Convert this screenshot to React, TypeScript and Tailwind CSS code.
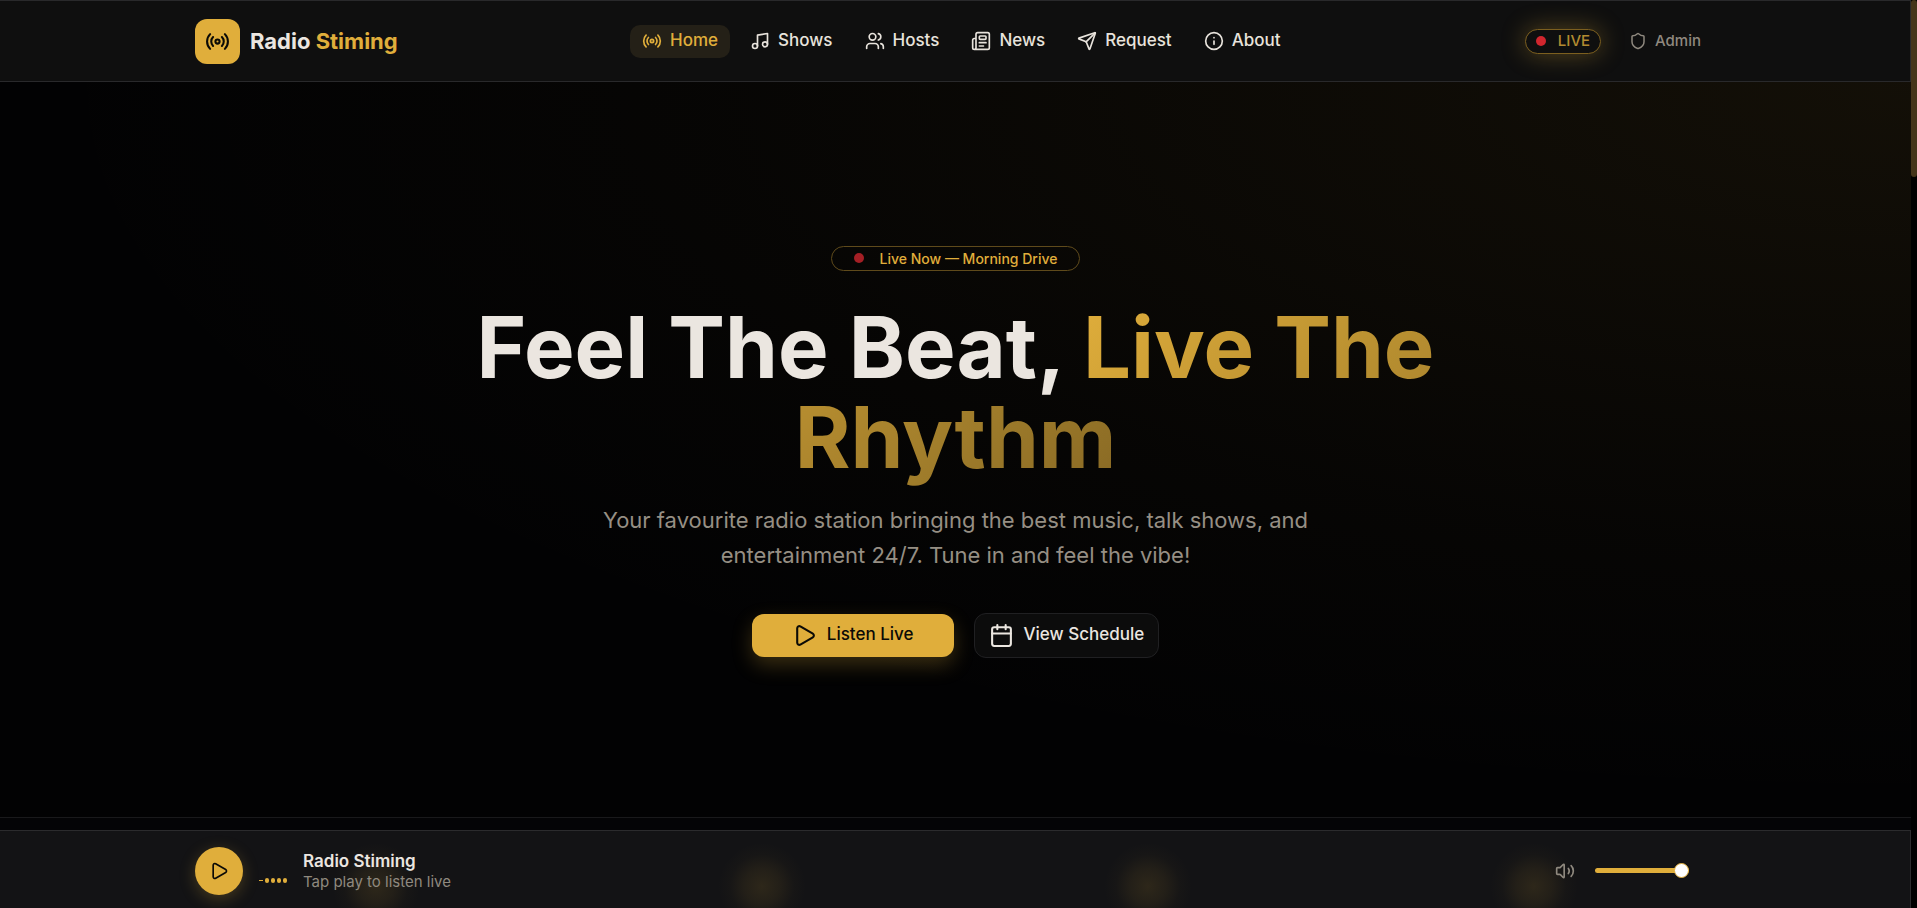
import { useState } from "react";
import {
  Calendar,
  Info,
  LucideIcon,
  Music,
  Newspaper,
  Play,
  Radio,
  Send,
  Shield,
  Users,
  Volume2,
} from "lucide-react";

interface NavItem {
  label: string;
  icon: LucideIcon;
  href: string;
}

const navItems: NavItem[] = [
  { label: "Home", icon: Radio, href: "#home" },
  { label: "Shows", icon: Music, href: "#shows" },
  { label: "Hosts", icon: Users, href: "#hosts" },
  { label: "News", icon: Newspaper, href: "#news" },
  { label: "Request", icon: Send, href: "#request" },
  { label: "About", icon: Info, href: "#about" },
];

const Header = () => {
  const [active, setActive] = useState("Home");

  return (
    <header className="border border-l-0 border-[#29292b] bg-[#0f0f0f]">
      <div className="mx-auto flex h-20 max-w-[1600px] items-center justify-between px-10">
        <a href="#home" className="flex items-center gap-2.5">
          <span className="flex size-[45px] items-center justify-center rounded-xl bg-[#e0ae3b] text-[#0b0a06]">
            <Radio className="size-[25px]" />
          </span>
          <span className="text-[22px] font-bold text-[#ebe6e0]">
            Radio <span className="text-[#e0ae3b]">Stiming</span>
          </span>
        </a>

        <nav className="flex items-center gap-2">
          {navItems.map(({ label, icon: Icon, href }) => (
            <a
              key={label}
              href={href}
              onClick={() => setActive(label)}
              className={`flex h-[33px] items-center gap-2 rounded-[10px] px-3 text-[17px] font-medium ${
                active === label ? "bg-[#242017] text-[#e0ae3b]" : "text-[#e8e3dc]"
              }`}
            >
              <Icon className="size-5" />
              {label}
            </a>
          ))}
        </nav>

        <div className="flex items-center gap-4 pr-3.5">
          <div className="flex h-[25px] items-center gap-3 rounded-full border border-[#7c5f1f] bg-[#0f0f0f] px-2.5 text-[15px] font-medium text-[#b18a30] shadow-[0_0_24px_rgba(224,174,59,0.35)]">
            <span className="size-2.5 rounded-full bg-[#d1262e]" />
            LIVE
          </div>
          <a href="#admin" className="flex items-center gap-2 pl-3 text-[15px] font-medium text-[#8f897f]">
            <Shield className="size-[18px]" />
            Admin
          </a>
        </div>
      </div>
    </header>
  );
};

const Hero = () => (
  <section
    id="home"
    className="flex flex-1 flex-col items-center justify-center border-b border-[#19191b] bg-[radial-gradient(ellipse_at_top_right,rgba(224,174,59,0.08),rgba(224,174,59,0.02)_45%,transparent_70%)] px-10 pt-1 text-center"
  >
    <div className="mb-8 flex h-[25px] items-center gap-4 rounded-full border border-[#5f4a1b] px-[22px] text-[14px] font-medium text-[#e0ae3b]">
      <span className="size-2.5 rounded-full bg-[#a41f25]" />
      Live Now — Morning Drive
    </div>

    <h1 className="mb-5 max-w-[1120px] text-[85px] leading-[90px] font-bold text-[#ebe6e0]">
      Feel The Beat,{" "}
      <span className="bg-linear-135 from-[#e0ae3b] to-[#e0ae3b]/60 bg-clip-text text-transparent">
        Live The Rhythm
      </span>
    </h1>

    <p className="mb-10 max-w-[720px] text-[22px] leading-[35px] text-[#968f84]">
      Your favourite radio station bringing the best music, talk shows, and entertainment 24/7. Tune in and feel
      the vibe!
    </p>

    <div className="flex items-center gap-5">
      <button className="flex h-[43px] items-center gap-2.5 rounded-xl bg-[#e0ae3b] px-10 text-[17px] font-medium text-[#0b0a06] shadow-[0_8px_20px_rgba(224,174,59,0.25)]">
        <Play className="size-[25px]" />
        Listen Live
      </button>
      <button className="flex h-[45px] items-center gap-2.5 rounded-xl border border-[#202022] bg-[#0c0c0c] px-3.5 text-[17px] font-medium text-[#ebe6e0]">
        <Calendar className="size-[25px]" />
        View Schedule
      </button>
    </div>
  </section>
);

const Player = () => {
  const [playing, setPlaying] = useState(false);
  const [volume, setVolume] = useState(100);

  return (
    <footer className="relative border-t border-r border-[#2b2b2d] bg-[#131315]">
      <div className="absolute inset-0 overflow-hidden" aria-hidden="true">
        <div className="mx-auto grid h-full max-w-[1600px] grid-cols-4 gap-6 px-10">
          {[0, 1, 2, 3].map((i) => (
            <div
              key={i}
              className="bg-[radial-gradient(circle_at_50%_72%,rgba(224,174,59,0.13),rgba(224,174,59,0.08)_18px,rgba(224,174,59,0.02)_32px,transparent_44px)]"
            />
          ))}
        </div>
      </div>

      <div className="relative mx-auto flex h-[77px] max-w-[1600px] items-center justify-between px-10 pt-0.5">
        <div className="flex items-center gap-4">
          <button
            aria-label={playing ? "Pause" : "Play"}
            onClick={() => setPlaying(!playing)}
            className="flex size-12 items-center justify-center rounded-full bg-[#e0ae3b] text-[#0b0a06] shadow-[0_4px_16px_rgba(224,174,59,0.25)]"
          >
            <Play className="size-5" />
          </button>
          <div className="flex h-6 items-end gap-0.5">
            <span className="mb-0.5 h-px w-1 bg-[#e0ae3b]" />
            <span className="h-[5px] w-1 rounded-full bg-[#e0ae3b]" />
            <span className="h-[5px] w-1 rounded-full bg-[#e0ae3b]" />
            <span className="h-[5px] w-1 rounded-full bg-[#e0ae3b]" />
            <span className="h-[5px] w-1 rounded-full bg-[#e0ae3b]" />
          </div>
          <div>
            <p className="text-[17px] leading-[22px] font-semibold text-[#ebe6e0]">Radio Stiming</p>
            <p className="text-[15px] leading-5 text-[#8f897f]">Tap play to listen live</p>
          </div>
        </div>

        <div className="flex items-center gap-5 pr-[26px]">
          <Volume2 className="size-5 text-[#8f897f]" />
          <input
            type="range"
            aria-label="Volume"
            min={0}
            max={100}
            value={volume}
            onChange={(e) => setVolume(Number(e.target.value))}
            className="h-[5px] w-[94px] appearance-none rounded-full bg-[#e0ae3b] [&::-webkit-slider-thumb]:size-[15px] [&::-webkit-slider-thumb]:appearance-none [&::-webkit-slider-thumb]:rounded-full [&::-webkit-slider-thumb]:border [&::-webkit-slider-thumb]:border-[#e0ae3b] [&::-webkit-slider-thumb]:bg-white"
          />
        </div>
      </div>
    </footer>
  );
};

const App = () => (
  <div className="flex min-h-screen bg-black font-['Inter',sans-serif]">
    <div className="flex flex-1 flex-col bg-[#020203]">
      <Header />
      <Hero />
      <div className="h-3 bg-[#040406]" />
      <Player />
    </div>
    <div className="w-1.5 bg-black">
      <div className="h-[177px] rounded-full bg-[#45351a]" />
    </div>
  </div>
);

export default App;
